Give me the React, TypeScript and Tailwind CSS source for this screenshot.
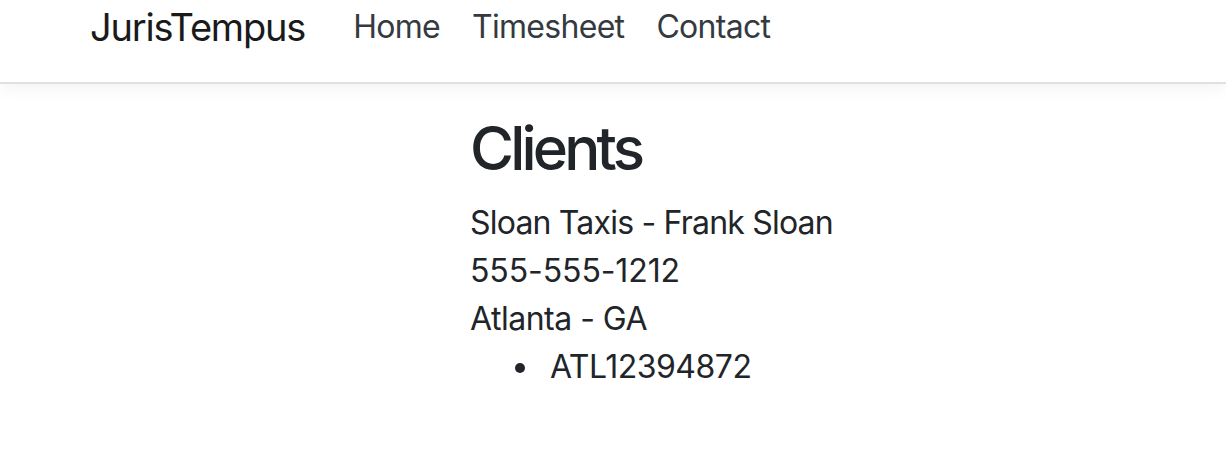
export default function App() {
  return (
    <div className="min-h-screen bg-white text-[#212529] font-['Inter','Liberation_Sans',sans-serif]">
      {/* Navbar */}
      <nav className="bg-white border-b-2 border-[#dee2e6] shadow-[0_4px_16px_rgba(0,0,0,0.05)] pb-[28px]">
        <div className="flex items-center h-[54px] pl-[90px]">
          <a className="text-[38px] leading-[60px] tracking-[-1.2px] text-[#1a1a1a] mr-[32px]">JurisTempus</a>
          <ul className="flex">
            <li><a className="px-4 text-[32px] leading-[48px] tracking-[-0.7px] text-[#343a40]">Home</a></li>
            <li><a className="px-4 text-[32px] leading-[48px] tracking-[-0.7px] text-[#343a40]">Timesheet</a></li>
            <li><a className="px-4 text-[32px] leading-[48px] tracking-[-0.7px] text-[#343a40]">Contact</a></li>
          </ul>
        </div>
      </nav>

      {/* Content */}
      <main className="pl-[470px] pt-[26px]">
        <h2 className="text-[60px] leading-[77px] tracking-[-3.8px] font-medium mb-[12px]">Clients</h2>
        <div className="text-[32px] leading-[48px] tracking-[-0.5px]">
          <div className="tracking-[-0.8px]">Sloan Taxis - Frank Sloan</div>
          <div className="tracking-[-0.1px]">555-555-1212</div>
          <div>Atlanta - GA</div>
          <ul className="pl-[80px]">
            <li className="relative">
              <span className="absolute left-[-35px] top-[20px] w-[10px] h-[10px] rounded-full bg-[#212529]" />
              ATL12394872
            </li>
          </ul>
        </div>
      </main>
    </div>
  )
}
